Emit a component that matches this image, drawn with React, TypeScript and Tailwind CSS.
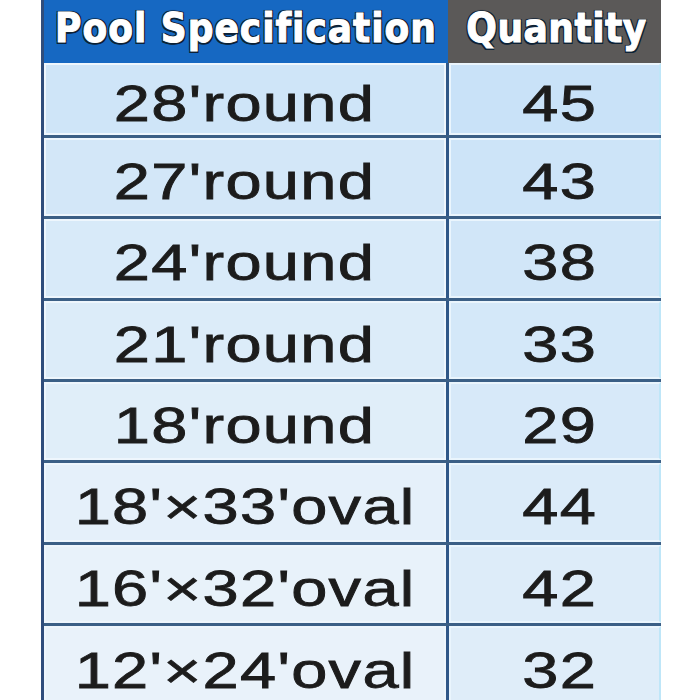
import React from "react";

const rows: [string, string][] = [
  ["28'round", "45"],
  ["27'round", "43"],
  ["24'round", "38"],
  ["21'round", "33"],
  ["18'round", "29"],
  ["18'×33'oval", "44"],
  ["16'×32'oval", "42"],
  ["12'×24'oval", "32"],
];

const leftBg = [
  "bg-[#cfe5f8]",
  "bg-[#d3e7f8]",
  "bg-[#d8eaf9]",
  "bg-[#dcecf9]",
  "bg-[#e0eef9]",
  "bg-[#e5f0fa]",
  "bg-[#e8f2fa]",
  "bg-[#e9f2fa]",
];
const rightBg = [
  "bg-[#c9e2f8]",
  "bg-[#cde4f8]",
  "bg-[#d1e6f8]",
  "bg-[#d4e8f9]",
  "bg-[#d7e9f9]",
  "bg-[#dbebf9]",
  "bg-[#ddecf9]",
  "bg-[#dfedf9]",
];

const heights = ["h-[75px]", "h-[81px]", "h-[82px]", "h-[81px]", "h-[81px]", "h-[82px]", "h-[81px]", "h-[81px]"];

const outline =
  "[text-shadow:0_0_2px_#0d2236,1.5px_1.5px_0_#0d2236,-1.5px_-1.5px_0_#0d2236,1.5px_-1.5px_0_#0d2236,-1.5px_1.5px_0_#0d2236,0_2px_0_#0d2236] [-webkit-text-stroke:1px_#ffffff]";

const bodyText =
  "text-[50px] text-[#1c1c1c] leading-none scale-x-[1.3] tracking-[1px] mt-[9px] [-webkit-text-stroke:0.8px_#1c1c1c]";

export default function App() {
  return (
    <div className="w-[700px] h-[700px] bg-white overflow-hidden">
      <div className="ml-[41px] w-[620px] border-l-[3px] border-[#2f4d7c] flex flex-col">
        <div className="flex h-[63px]">
          <div
            className={`w-[404px] bg-[#1668c2] flex items-center justify-center text-white font-bold text-[40px] tracking-[1px] ${outline}`}
            style={{ fontFamily: '"DejaVu Sans Condensed", "DejaVu Sans", sans-serif', fontStretch: "condensed" }}
          >
            <span className="-mt-[8px]">Pool Specification</span>
          </div>
          <div
            className={`flex-1 bg-[#5b5958] flex items-center justify-center text-white font-bold text-[40px] tracking-[0.5px] ${outline}`}
            style={{ fontFamily: '"DejaVu Sans Condensed", "DejaVu Sans", sans-serif', fontStretch: "condensed" }}
          >
            <span className="-mt-[8px] ml-[4px]">Quantity</span>
          </div>
        </div>
        {rows.map(([spec, qty], i) => (
          <div
            key={spec}
            className={`flex ${heights[i]} ${i < rows.length - 1 ? "border-b-[3px] border-[#3b5f86]" : ""}`}
          >
            <div
              className={`w-[402px] ${leftBg[i]} border-[2px] border-[#eef6fd] flex items-center justify-center`}
            >
              <span className={bodyText} style={{ fontFamily: '"Liberation Sans", Arial, sans-serif' }}>
                {spec}
              </span>
            </div>
            <div className="w-[3px] bg-[#2f5788]" />
            <div
              className={`flex-1 ${rightBg[i]} border-[2px] border-[#eaf5fd] border-r-[#bfe6f8] flex items-center justify-center`}
            >
              <span className={`${bodyText} ml-[10px]`} style={{ fontFamily: '"Liberation Sans", Arial, sans-serif' }}>
                {qty}
              </span>
            </div>
          </div>
        ))}
      </div>
    </div>
  );
}
